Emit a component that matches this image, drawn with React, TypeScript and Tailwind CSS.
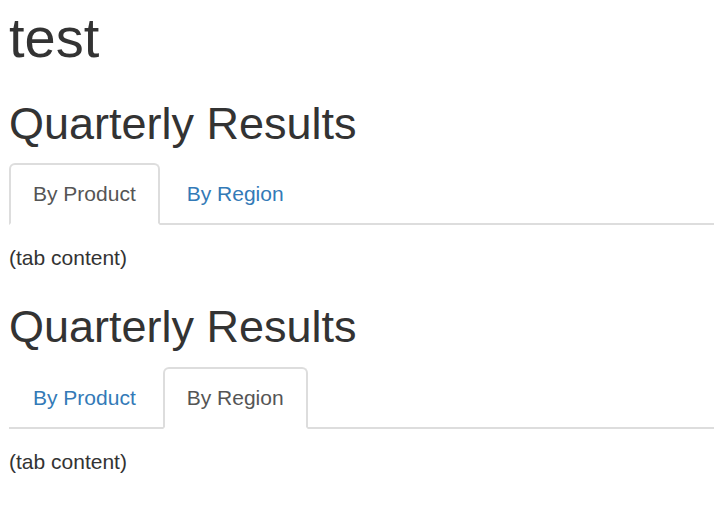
import { useState } from "react";

const tabs = ["By Product", "By Region"];

function TabSet({ initial, className }: { initial: number; className: string }) {
  const [active, setActive] = useState(initial);

  return (
    <div className={className}>
      <h2 className="text-[45px] leading-[1.1] font-normal text-[#333] mb-[15px]">Quarterly Results</h2>
      <ul className="flex border-b-2 border-[#dddddd]">
        {tabs.map((t, i) => (
          <li key={t} className="-mb-[2px]">
            <a
              href="#"
              onClick={(e) => {
                e.preventDefault();
                setActive(i);
              }}
              className={
                i === active
                  ? "block mr-[3px] px-[22px] py-[14px] leading-[30px] border-2 border-[#dddddd] border-b-white bg-white rounded-t-[6px] text-[#555]"
                  : "block mr-[3px] px-[22px] py-[14px] leading-[30px] border-2 border-transparent rounded-t-[6px] text-[#337ab7]"
              }
            >
              {t}
            </a>
          </li>
        ))}
      </ul>
      <div className="pt-[18px] leading-[30px]">(tab content)</div>
    </div>
  );
}

export default function App() {
  return (
    <div
      className="min-h-screen bg-white pl-[9px] pt-[7px] text-[21px] text-[#333]"
      style={{ fontFamily: '"Liberation Sans", Arial, sans-serif' }}
    >
      <h1 className="text-[56px] leading-[1.1] font-normal text-[#333]">test</h1>
      <TabSet initial={0} className="mt-[30px]" />
      <TabSet initial={1} className="mt-[29px]" />
    </div>
  );
}
